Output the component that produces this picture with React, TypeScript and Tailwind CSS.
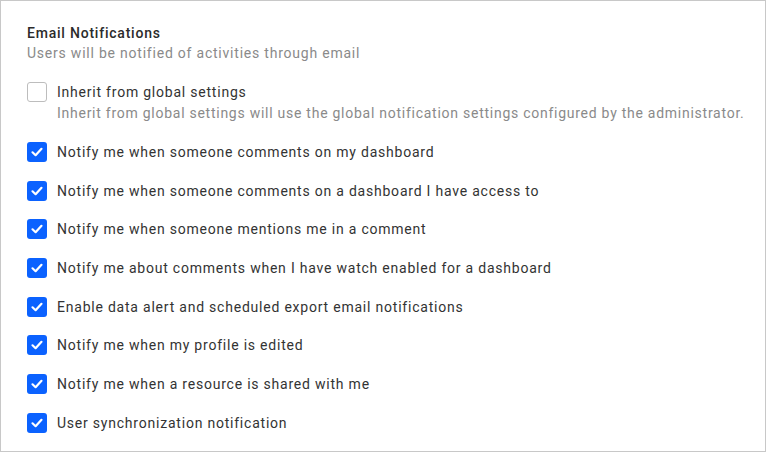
import { useState } from "react";

const options = [
  "Notify me when someone comments on my dashboard",
  "Notify me when someone comments on a dashboard I have access to",
  "Notify me when someone mentions me in a comment",
  "Notify me about comments when I have watch enabled for a dashboard",
  "Enable data alert and scheduled export email notifications",
  "Notify me when my profile is edited",
  "Notify me when a resource is shared with me",
  "User synchronization notification"
];

function Box({ checked, onClick }: { checked: boolean; onClick: () => void }) {
  return (
    <button
      type="button"
      onClick={onClick}
      className={
        checked
          ? "flex h-5 w-5 shrink-0 items-center justify-center rounded-[3px] bg-[#0b62ff]"
          : "h-5 w-5 shrink-0 rounded-[3px] border border-[#bdbdbd] bg-white"
      }
    >
      {checked && (
        <svg width="14" height="14" viewBox="0 0 14 14" fill="none">
          <path
            d="M2.5 7.3 L5.6 10.2 L11.5 3.8"
            stroke="white"
            strokeWidth="2.2"
            strokeLinecap="round"
            strokeLinejoin="round"
          />
        </svg>
      )}
    </button>
  );
}

export default function App() {
  const [inherit, setInherit] = useState(false);
  const [checked, setChecked] = useState(options.map(() => true));

  return (
    <div
      className="h-[452px] w-[766px] border border-[#c8c8c8] bg-white pl-[26px] pt-[22px] text-[14px] leading-5 tracking-[0.78px] text-[#333333]"
      style={{ fontFamily: "Roboto, 'Liberation Sans', sans-serif" }}
    >
      <p className="font-medium text-[#2b2b2b]">Email Notifications</p>
      <p className="text-[#8a8a8a]">Users will be notified of activities through email</p>

      <div className="mt-[19px] flex gap-[10px]">
        <Box checked={inherit} onClick={() => setInherit(!inherit)} />
        <div>
          <p>Inherit from global settings</p>
          <p className="mt-[1px] whitespace-nowrap tracking-[0.74px] text-[#8a8a8a]">
            Inherit from global settings will use the global notification settings configured by the administrator.
          </p>
        </div>
      </div>

      <div className="mt-[19px] flex flex-col gap-[18.7px]">
        {options.map((label, i) => (
          <div key={label} className="flex items-center gap-[10px]">
            <Box
              checked={checked[i]}
              onClick={() => setChecked(checked.map((c, j) => (j === i ? !c : c)))}
            />
            <span>{label}</span>
          </div>
        ))}
      </div>
    </div>
  );
}
